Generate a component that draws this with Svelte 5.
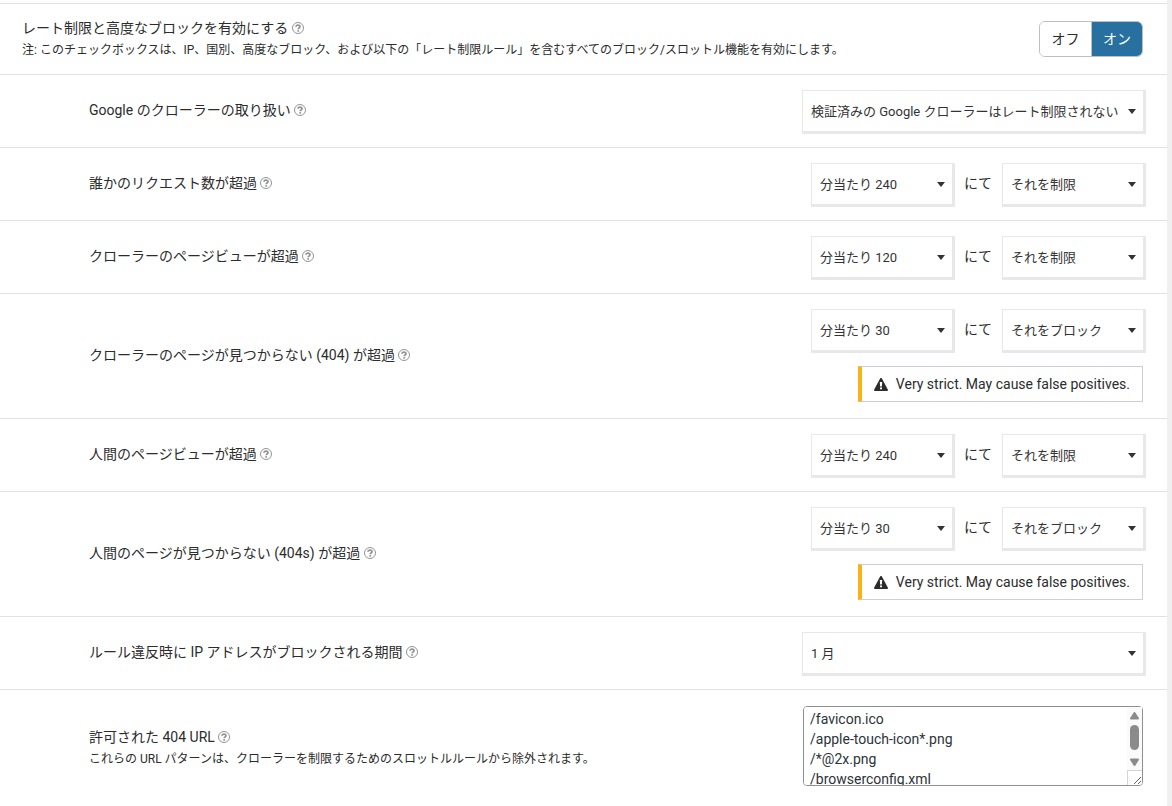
<script lang="ts">
	const rateOptions = ['分当たり 240', '分当たり 120', '分当たり 30'];
	const actionOptions = ['それを制限', 'それをブロック'];

	let enabled = $state(true);
	let crawlerPolicy = $state('検証済みの Google クローラーはレート制限されない');
	let blockDuration = $state('1 月');
	let allowed404 = $state(
		'/favicon.ico\n/apple-touch-icon*.png\n/*@2x.png\n/browserconfig.xml'
	);

	let rules = $state([
		{ id: 'requests', label: '誰かのリクエスト数が超過', rate: '分当たり 240', action: 'それを制限', strict: false },
		{ id: 'crawler-views', label: 'クローラーのページビューが超過', rate: '分当たり 120', action: 'それを制限', strict: false },
		{ id: 'crawler-404', label: 'クローラーのページが見つからない (404) が超過', rate: '分当たり 30', action: 'それをブロック', strict: true },
		{ id: 'human-views', label: '人間のページビューが超過', rate: '分当たり 240', action: 'それを制限', strict: false },
		{ id: 'human-404', label: '人間のページが見つからない (404s) が超過', rate: '分当たり 30', action: 'それをブロック', strict: true }
	]);
</script>

{#snippet help()}
	<a class="help" href="#help" aria-label="ヘルプ">
		<svg width="12" height="12" viewBox="0 0 24 24" fill="none" stroke="currentColor">
			<circle cx="12" cy="12" r="11" stroke-width="2" />
			<path d="M8 9.500C8.200 7.200 9.800 6 12 6s4 1.300 4 3.300c0 2.800-3.600 2.700-3.600 5.200" stroke-width="3.500" />
			<path d="M10.600 16.200h3.600v3.200h-3.600z" fill="currentColor" stroke="none" />
		</svg>
	</a>
{/snippet}

<main class="panel">
	<section class="row top">
		<div class="text">
			<div class="title" id="enable-label">レート制限と高度なブロックを有効にする {@render help()}</div>
			<div class="note">注: このチェックボックスは、IP、国別、高度なブロック、および以下の「レート制限ルール」を含むすべてのブロック/スロットル機能を有効にします。</div>
		</div>
		<div class="toggle" role="group" aria-labelledby="enable-label">
			<button class:active={!enabled} onclick={() => (enabled = false)}>オフ</button>
			<button class:active={enabled} onclick={() => (enabled = true)}>オン</button>
		</div>
	</section>

	<section class="row">
		<div class="label"><label for="crawler-policy">Google のクローラーの取り扱い</label> {@render help()}</div>
		<div class="select wide">
			<select id="crawler-policy" bind:value={crawlerPolicy}>
				<option>検証済みの Google クローラーはレート制限されない</option>
			</select>
		</div>
	</section>

	{#each rules as rule (rule.id)}
		<section class="row">
			<div class="label"><label for={rule.id}>{rule.label}</label> {@render help()}</div>
			<div class="controls">
				<div class="pair">
					<div class="select">
						<select id={rule.id} bind:value={rule.rate}>
							{#each rateOptions as option}
								<option>{option}</option>
							{/each}
						</select>
					</div>
					<span class="then">にて</span>
					<div class="select">
						<select aria-label={rule.label} bind:value={rule.action}>
							{#each actionOptions as option}
								<option>{option}</option>
							{/each}
						</select>
					</div>
				</div>
				{#if rule.strict}
					<div class="warning">
						<svg width="14" height="13" viewBox="0 0 28 26">
							<path fill="currentColor" fill-rule="evenodd" d="M12.200 1.200a2.100 2.100 0 0 1 3.600 0l11.800 21.600A2.100 2.100 0 0 1 25.800 26H2.200a2.100 2.100 0 0 1-1.800-3.200zM11.600 8l.6 9h3.600l.6-9zM12 19v3.600h4V19z" />
						</svg>
						<span>Very strict. May cause false positives.</span>
					</div>
				{/if}
			</div>
		</section>
	{/each}

	<section class="row">
		<div class="label"><label for="block-duration">ルール違反時に IP アドレスがブロックされる期間</label> {@render help()}</div>
		<div class="select wide">
			<select id="block-duration" bind:value={blockDuration}>
				<option>1 月</option>
			</select>
		</div>
	</section>

	<section class="row last">
		<div class="text">
			<div class="title"><label for="allowed-404">許可された 404 URL</label> {@render help()}</div>
			<div class="note">これらの URL パターンは、クローラーを制限するためのスロットルルールから除外されます。</div>
		</div>
		<div class="urls">
			<textarea id="allowed-404" bind:value={allowed404}></textarea>
			<div class="scrollbar" aria-hidden="true">
				<svg width="15" height="63" viewBox="0 0 15 63" fill="#8b8b8b" stroke="#8b8b8b" stroke-linejoin="round">
					<path d="M7.500 6L11 11.500H4z" stroke-width="2" />
					<rect x="3" y="18" width="9" height="25" rx="4.500" stroke="none" />
					<path d="M7.500 58L11 52.500H4z" stroke-width="2" />
				</svg>
				<div class="corner"></div>
			</div>
		</div>
	</section>
</main>

<style>
	:global(body) {
		background: #f0f0f1;
	}

	.panel {
		margin-right: 5px;
		padding-top: 3px;
		background: #fff;
		color: #2c2c2c;
		font-family: Roboto, 'Noto Sans CJK JP', sans-serif;
		font-size: 14px;
		line-height: 20px;
	}

	.row {
		display: flex;
		align-items: center;
		justify-content: space-between;
		border-top: 1px solid #e2e2e2;
		padding: 15px 21px 13px 89px;
	}

	.row.top {
		padding: 14px 24px 14px 22px;
	}

	.row.last {
		padding: 16px 24px 16px 89px;
	}

	.label {
		padding-bottom: 4px;
	}

	.note {
		padding-top: 2px;
		font-size: 12px;
	}

	.help {
		display: inline-block;
		height: 12px;
		line-height: 12px;
		color: #949494;
		vertical-align: -1px;
	}

	.help svg {
		display: block;
	}

	.toggle {
		display: flex;
		flex-shrink: 0;
		border: 1px solid #bfbfbf;
		border-radius: 6px;
		overflow: hidden;
	}

	.toggle button {
		width: 51px;
		height: 34px;
		border: 0;
		padding: 0;
		background: #fff;
		color: inherit;
		font: inherit;
	}

	.toggle button + button {
		border-left: 1px solid #bfbfbf;
	}

	.toggle .active {
		background: #2870a0;
		color: #fff;
	}

	.controls {
		display: flex;
		flex-direction: column;
		align-items: flex-end;
		flex-shrink: 0;
	}

	.pair {
		display: flex;
		align-items: center;
	}

	.then {
		margin: 0 10px 0 9px;
		padding-bottom: 4px;
	}

	.select {
		position: relative;
		flex-shrink: 0;
		width: 144px;
	}

	.select.wide {
		width: 344px;
	}

	.select::after {
		content: '';
		position: absolute;
		top: 19px;
		right: 10px;
		border: 4px solid transparent;
		border-top: 5px solid #333;
		border-bottom: 0;
		pointer-events: none;
	}

	select {
		display: block;
		appearance: none;
		box-sizing: border-box;
		width: 100%;
		height: 44px;
		border: 1px solid #e8e8e8;
		border-right-width: 3px;
		border-bottom-width: 3px;
		border-radius: 0;
		padding: 0 8px;
		background: #fff;
		color: #333;
		font-family: inherit;
		font-size: 13px;
	}

	.warning {
		display: flex;
		align-items: center;
		gap: 8px;
		box-sizing: border-box;
		height: 36px;
		margin: 13px 3px 3px 0;
		border: 1px solid #ccd0d4;
		border-left: 4px solid #fcb214;
		padding: 0 12px;
	}

	.urls {
		position: relative;
		flex-shrink: 0;
		margin-bottom: 4px;
	}

	textarea {
		display: block;
		box-sizing: border-box;
		width: 340px;
		height: 80px;
		border: 1px solid #8c8f94;
		border-radius: 4px;
		padding: 2px 6px;
		background: #fff;
		color: #2c3338;
		font: inherit;
		resize: both;
	}

	.scrollbar {
		position: absolute;
		top: 1px;
		right: 1px;
		width: 15px;
		pointer-events: none;
	}

	.scrollbar svg {
		display: block;
		background: #fafafa;
	}

	.corner {
		box-sizing: border-box;
		height: 15px;
		border: 1px solid #d5d5d5;
		border-width: 1px 0 0 1px;
	}
</style>
